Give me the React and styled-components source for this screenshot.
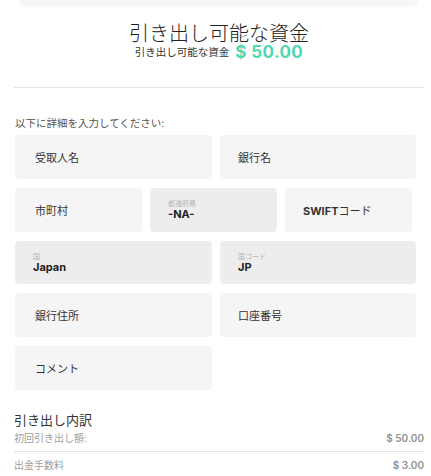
import React from "react";
import styled, { createGlobalStyle } from "styled-components";

const Global = createGlobalStyle`
  html, body { margin: 0; padding: 0; background: #fff; }
  body {
    font-family: Inter, "Noto Sans CJK JP", sans-serif;
    color: #333;
    -webkit-font-smoothing: antialiased;
  }
`;

const Page = styled.div`
  width: 431px;
  height: 476px;
  overflow: hidden;
  box-sizing: border-box;
  padding: 0 7px 0 14px;
`;

const TopCard = styled.div`
  margin: 0 6px;
  height: 3px;
  background: #f6f6f6;
  border-radius: 0 0 8px 8px;
  box-shadow: 0 2px 4px rgba(0, 0, 0, 0.07);
`;

const Header = styled.header`
  padding-top: 22px;
  display: flex;
  flex-direction: column;
  align-items: center;
`;

const Title = styled.h1`
  margin: 0;
  font-family: "Liberation Sans", "Noto Sans CJK JP", sans-serif;
  font-size: 20px;
  line-height: 18px;
  font-weight: 300;
  color: #222;
`;

const SubRow = styled.div`
  margin-top: 1px;
  height: 16px;
  display: flex;
  align-items: center;
  gap: 6px;
`;

const SubLabel = styled.span`
  display: inline-block;
  font-family: "Liberation Sans", "Noto Sans CJK JP", sans-serif;
  font-size: 10.5px;
  line-height: 14px;
  color: #333;
`;

const Amount = styled.span`
  display: inline-block;
  font-size: 17px;
  line-height: 16px;
  font-weight: 700;
  color: #4fd8b2;
  letter-spacing: 0.4px;
`;

const Divider = styled.hr`
  margin: 27px 0 0;
  border: 0;
  height: 1px;
  background: #e6e6e6;
`;

const Intro = styled.p`
  margin: 28px 0 3px 1px;
  font-size: 10.5px;
  line-height: 16px;
  color: #555;
`;

const Form = styled.div`
  margin-left: 1px;
  width: 401px;
  display: flex;
  flex-direction: column;
  gap: 9px;
`;

const Row = styled.div`
  display: grid;
  grid-template-columns: ${(p) => (p.$cols === 3 ? "127px 127px 127px" : "197px 196px")};
  gap: 8px;
`;

const Field = styled.div`
  height: 43.75px;
  box-sizing: border-box;
  border-radius: 4px;
  background: ${(p) => (p.$filled ? "#ededed" : "#f5f5f5")};
  padding-left: ${(p) => (p.$first ? "20px" : "18px")};
  display: flex;
  flex-direction: column;
  justify-content: center;
  font-size: 11px;
  color: #333;
`;

const Tiny = styled.span`
  font-size: 7px;
  line-height: 9px;
  color: #b5b5b5;
`;

const Value = styled.span`
  font-size: 11px;
  line-height: 12px;
  font-weight: 700;
  color: #222;
`;

const Bold = styled.b`
  font-weight: 700;
`;

const Breakdown = styled.section`
  margin-top: 21px;
`;

const BreakTitle = styled.h2`
  margin: 0;
  font-size: 13px;
  line-height: 18px;
  font-weight: 400;
  color: #333;
`;

const BreakRow = styled.div`
  display: flex;
  justify-content: space-between;
  align-items: center;
  font-size: 10px;
  line-height: 14px;
  padding: ${(p) => (p.$firstRow ? "2px 0 6px" : "6px 0")};
  border-bottom: ${(p) => (p.$line ? "1px solid #e3e3e3" : "none")};
`;

const BreakLabel = styled.span`
  color: #a0a0a0;
`;

const BreakValue = styled.span`
  color: #919191;
  font-weight: 600;
`;

function PlainField({ children, first }) {
  return <Field $first={first}>{children}</Field>;
}

function LabeledField({ label, value }) {
  return (
    <Field $filled>
      <Tiny>{label}</Tiny>
      <Value>{value}</Value>
    </Field>
  );
}

export default function App() {
  return (
    <>
      <Global />
      <Page>
        <TopCard />
        <Header>
          <Title>引き出し可能な資金</Title>
          <SubRow>
            <SubLabel>引き出し可能な資金</SubLabel>
            <Amount>$ 50.00</Amount>
          </SubRow>
        </Header>
        <Divider />
        <Intro>以下に詳細を入力してください:</Intro>
        <Form>
          <Row>
            <PlainField first>受取人名</PlainField>
            <PlainField>銀行名</PlainField>
          </Row>
          <Row $cols={3}>
            <PlainField first>市町村</PlainField>
            <LabeledField label="都道府県" value="-NA-" />
            <PlainField>
              <span>
                <Bold>SWIFT</Bold>コード
              </span>
            </PlainField>
          </Row>
          <Row>
            <LabeledField label="国" value="Japan" />
            <LabeledField label="国コード" value="JP" />
          </Row>
          <Row>
            <PlainField first>銀行住所</PlainField>
            <PlainField>口座番号</PlainField>
          </Row>
          <Row>
            <PlainField first>コメント</PlainField>
          </Row>
        </Form>
        <Breakdown>
          <BreakTitle>引き出し内訳</BreakTitle>
          <BreakRow $firstRow $line>
            <BreakLabel>初回引き出し額:</BreakLabel>
            <BreakValue>$ 50.00</BreakValue>
          </BreakRow>
          <BreakRow>
            <BreakLabel>出金手数料</BreakLabel>
            <BreakValue>$ 3.00</BreakValue>
          </BreakRow>
        </Breakdown>
      </Page>
    </>
  );
}
